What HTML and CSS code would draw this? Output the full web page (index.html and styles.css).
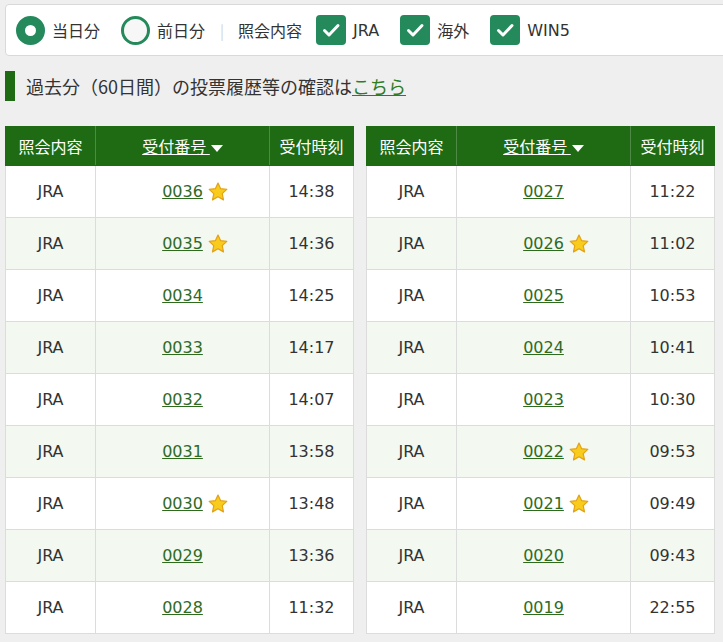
FILE: index.html
```html
<!DOCTYPE html>
<html lang="ja">
<head>
<meta charset="utf-8">
<link rel="stylesheet" href="styles.css">
</head>
<body>
<div class="filter">
  <label class="opt"><span class="radio on"></span><span>当日分</span></label>
  <label class="opt"><span class="radio"></span><span>前日分</span></label>
  <span class="sep">|</span>
  <span class="opt-label">照会内容</span>
  <label class="opt"><span class="check"><svg viewBox="0 0 30 30" width="30" height="30"><path d="M8.5 15.5 L13 20 L22 10.5" fill="none" stroke="#fff" stroke-width="3" stroke-linecap="round" stroke-linejoin="round"/></svg></span><span>JRA</span></label>
  <label class="opt"><span class="check"><svg viewBox="0 0 30 30" width="30" height="30"><path d="M8.5 15.5 L13 20 L22 10.5" fill="none" stroke="#fff" stroke-width="3" stroke-linecap="round" stroke-linejoin="round"/></svg></span><span>海外</span></label>
  <label class="opt"><span class="check"><svg viewBox="0 0 30 30" width="30" height="30"><path d="M8.5 15.5 L13 20 L22 10.5" fill="none" stroke="#fff" stroke-width="3" stroke-linecap="round" stroke-linejoin="round"/></svg></span><span>WIN5</span></label>
</div>

<div class="past">
  <span class="bar"></span>
  <p>過去分（60日間）の投票履歴等の確認は<a href="#">こちら</a></p>
</div>

<div class="tables">
  <table class="list">
    <colgroup><col class="c1"><col class="c2"><col class="c3"></colgroup>
    <thead>
      <tr><th>照会内容</th><th><a href="#" class="sort">受付番号 </a><span class="tri"></span></th><th>受付時刻</th></tr>
    </thead>
    <tbody>
      <tr><td>JRA</td><td><span class="num"><a href="#">0036</a><svg class="star" viewBox="0 0 24 24" width="22" height="22"><path d="M12 2.2 L14.9 8.4 L21.6 9.2 L16.6 13.8 L18 20.6 L12 17.2 L6 20.6 L7.4 13.8 L2.4 9.2 L9.1 8.4 Z" fill="#f9cb1c" stroke="#e3a214" stroke-width="1.3" stroke-linejoin="round"/></svg></span></td><td>14:38</td></tr>
      <tr><td>JRA</td><td><span class="num"><a href="#">0035</a><svg class="star" viewBox="0 0 24 24" width="22" height="22"><path d="M12 2.2 L14.9 8.4 L21.6 9.2 L16.6 13.8 L18 20.6 L12 17.2 L6 20.6 L7.4 13.8 L2.4 9.2 L9.1 8.4 Z" fill="#f9cb1c" stroke="#e3a214" stroke-width="1.3" stroke-linejoin="round"/></svg></span></td><td>14:36</td></tr>
      <tr><td>JRA</td><td><span class="num"><a href="#">0034</a></span></td><td>14:25</td></tr>
      <tr><td>JRA</td><td><span class="num"><a href="#">0033</a></span></td><td>14:17</td></tr>
      <tr><td>JRA</td><td><span class="num"><a href="#">0032</a></span></td><td>14:07</td></tr>
      <tr><td>JRA</td><td><span class="num"><a href="#">0031</a></span></td><td>13:58</td></tr>
      <tr><td>JRA</td><td><span class="num"><a href="#">0030</a><svg class="star" viewBox="0 0 24 24" width="22" height="22"><path d="M12 2.2 L14.9 8.4 L21.6 9.2 L16.6 13.8 L18 20.6 L12 17.2 L6 20.6 L7.4 13.8 L2.4 9.2 L9.1 8.4 Z" fill="#f9cb1c" stroke="#e3a214" stroke-width="1.3" stroke-linejoin="round"/></svg></span></td><td>13:48</td></tr>
      <tr><td>JRA</td><td><span class="num"><a href="#">0029</a></span></td><td>13:36</td></tr>
      <tr><td>JRA</td><td><span class="num"><a href="#">0028</a></span></td><td>11:32</td></tr>
    </tbody>
  </table>

  <table class="list">
    <colgroup><col class="c1"><col class="c2"><col class="c3"></colgroup>
    <thead>
      <tr><th>照会内容</th><th><a href="#" class="sort">受付番号 </a><span class="tri"></span></th><th>受付時刻</th></tr>
    </thead>
    <tbody>
      <tr><td>JRA</td><td><span class="num"><a href="#">0027</a></span></td><td>11:22</td></tr>
      <tr><td>JRA</td><td><span class="num"><a href="#">0026</a><svg class="star" viewBox="0 0 24 24" width="22" height="22"><path d="M12 2.2 L14.9 8.4 L21.6 9.2 L16.6 13.8 L18 20.6 L12 17.2 L6 20.6 L7.4 13.8 L2.4 9.2 L9.1 8.4 Z" fill="#f9cb1c" stroke="#e3a214" stroke-width="1.3" stroke-linejoin="round"/></svg></span></td><td>11:02</td></tr>
      <tr><td>JRA</td><td><span class="num"><a href="#">0025</a></span></td><td>10:53</td></tr>
      <tr><td>JRA</td><td><span class="num"><a href="#">0024</a></span></td><td>10:41</td></tr>
      <tr><td>JRA</td><td><span class="num"><a href="#">0023</a></span></td><td>10:30</td></tr>
      <tr><td>JRA</td><td><span class="num"><a href="#">0022</a><svg class="star" viewBox="0 0 24 24" width="22" height="22"><path d="M12 2.2 L14.9 8.4 L21.6 9.2 L16.6 13.8 L18 20.6 L12 17.2 L6 20.6 L7.4 13.8 L2.4 9.2 L9.1 8.4 Z" fill="#f9cb1c" stroke="#e3a214" stroke-width="1.3" stroke-linejoin="round"/></svg></span></td><td>09:53</td></tr>
      <tr><td>JRA</td><td><span class="num"><a href="#">0021</a><svg class="star" viewBox="0 0 24 24" width="22" height="22"><path d="M12 2.2 L14.9 8.4 L21.6 9.2 L16.6 13.8 L18 20.6 L12 17.2 L6 20.6 L7.4 13.8 L2.4 9.2 L9.1 8.4 Z" fill="#f9cb1c" stroke="#e3a214" stroke-width="1.3" stroke-linejoin="round"/></svg></span></td><td>09:49</td></tr>
      <tr><td>JRA</td><td><span class="num"><a href="#">0020</a></span></td><td>09:43</td></tr>
      <tr><td>JRA</td><td><span class="num"><a href="#">0019</a></span></td><td>22:55</td></tr>
    </tbody>
  </table>
</div>
</body>
</html>
```

FILE: styles.css
```css
html, body {
  margin: 0;
  padding: 0;
  background: #efefef;
  color: #333;
  font-family: "DejaVu Sans", "Noto Sans CJK JP", sans-serif;
  font-size: 16px;
  overflow: hidden;
}

.filter {
  display: flex;
  align-items: center;
  height: 50px;
  margin: 4px -10px 0 5px;
  padding-left: 10px;
  background: #fff;
  border: 1px solid #d9d9d9;
  border-radius: 4px;
  font-family: "Noto Sans CJK JP", sans-serif;
}

.opt {
  display: flex;
  align-items: center;
  gap: 7px;
  margin-right: 21px;
  font-family: "DejaVu Sans", "Noto Sans CJK JP", sans-serif;
}

.radio {
  box-sizing: border-box;
  width: 29px;
  height: 29px;
  border-radius: 50%;
  border: 3px solid #24895b;
  background: #f7f7f7;
}

.radio.on {
  border-width: 9px;
  background: #fff;
}

.sep {
  color: #d5d5d5;
  margin: 0 14px 0 -6px;
  font-size: 15px;
}

.opt-label {
  margin-right: 14px;
}

.check {
  width: 30px;
  height: 30px;
  border-radius: 4px;
  background: #24895b;
  display: block;
}

.check svg {
  display: block;
}

.past {
  display: flex;
  align-items: center;
  gap: 11px;
  margin: 15px 0 0 5px;
}

.bar {
  width: 10px;
  height: 30px;
  background: #1e6b14;
}

.past p {
  margin: 0;
  font-family: "Noto Sans CJK JP", sans-serif;
  font-size: 18px;
}

.past a {
  color: #2f7d1f;
}

.tables {
  display: flex;
  gap: 12px;
  margin: 25px 0 0 5px;
  align-items: flex-start;
}

.list {
  width: 348px;
  table-layout: fixed;
  border-collapse: collapse;
  background: #fff;
  border: 1px solid #dcdcdc;
}

.c1 { width: 90px; }
.c2 { width: 174px; }
.c3 { width: 84px; }

.list th {
  height: 38px;
  padding: 0;
  background: #1e6b14;
  color: #fff;
  font-family: "Noto Sans CJK JP", sans-serif;
  font-weight: normal;
  font-size: 16px;
  border: 1px solid #4e8a45;
  border-top-color: #1e6b14;
  border-bottom-color: #1e6b14;
}

.list th:first-child { border-left-color: #1e6b14; }
.list th:last-child { border-right-color: #1e6b14; }

.sort {
  color: #fff;
  text-decoration: underline;
  white-space: pre;
}

.tri {
  display: inline-block;
  width: 0;
  height: 0;
  border-left: 6px solid transparent;
  border-right: 6px solid transparent;
  border-top: 7px solid #fff;
  vertical-align: middle;
  margin-left: 1px;
}

.list td {
  height: 51px;
  padding: 0;
  text-align: center;
  border: 1px solid #dcdcdc;
}

.list tbody tr:nth-child(even) td {
  background: #f3f8f1;
}

.num {
  position: relative;
  display: inline-block;
}

.num a {
  color: #2f6b1f;
  text-decoration: underline;
}

.star {
  position: absolute;
  left: calc(100% + 4px);
  top: 50%;
  transform: translateY(-50%);
}
```
